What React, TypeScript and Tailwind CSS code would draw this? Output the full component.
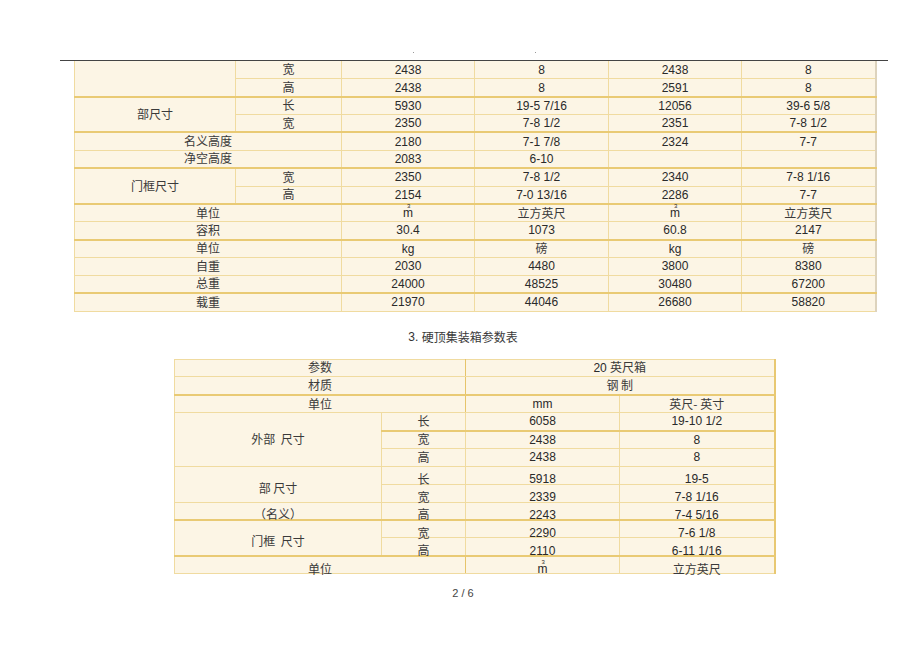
import React from "react";

const num = "font-['Liberation_Sans',Arial,sans-serif]";
const cjk = "font-['Noto_Sans_CJK_SC','Noto_Sans',sans-serif]";

const cell = "border border-[#f0dba0] p-0 text-center align-middle text-[12px] leading-[14px] text-[#2a2a2a] whitespace-nowrap";
const thickTop = "border-t-2 border-t-[#e9ca74]";
const majorLeft = "border-l-[1.5px] border-l-[#e6c46a]";

function M3() {
  return (
    <span className={`relative inline-block ${num}`}>
      m
      <span className="absolute left-[4px] top-[-3px] text-[6px] leading-[6px]">3</span>
    </span>
  );
}

function Zh({ children }: { children: React.ReactNode }) {
  return <span className={`${cjk} text-[#3a3a3a]`}>{children}</span>;
}

function N({ children }: { children: React.ReactNode }) {
  return <span className={num}>{children}</span>;
}

type Row = {
  label?: { text: string; rowSpan?: number; colSpan?: number };
  sub?: string;
  vals: React.ReactNode[];
  thick?: boolean;
};

const topRows: Row[] = [
  { label: { text: "", rowSpan: 2 }, sub: "宽", vals: ["2438", "8", "2438", "8"] },
  { sub: "高", vals: ["2438", "8", "2591", "8"] },
  { label: { text: "部尺寸", rowSpan: 2 }, sub: "长", vals: ["5930", "19-5 7/16", "12056", "39-6 5/8"], thick: true },
  { sub: "宽", vals: ["2350", "7-8 1/2", "2351", "7-8 1/2"] },
  { label: { text: "名义高度", colSpan: 2 }, vals: ["2180", "7-1 7/8", "2324", "7-7"], thick: true },
  { label: { text: "净空高度", colSpan: 2 }, vals: ["2083", "6-10", "", ""] },
  { label: { text: "门框尺寸", rowSpan: 2 }, sub: "宽", vals: ["2350", "7-8 1/2", "2340", "7-8 1/16"], thick: true },
  { sub: "高", vals: ["2154", "7-0 13/16", "2286", "7-7"] },
  { label: { text: "单位", colSpan: 2 }, vals: [<M3 />, <Zh>立方英尺</Zh>, <M3 />, <Zh>立方英尺</Zh>], thick: true },
  { label: { text: "容积", colSpan: 2 }, vals: ["30.4", "1073", "60.8", "2147"] },
  { label: { text: "单位", colSpan: 2 }, vals: ["kg", <Zh>磅</Zh>, "kg", <Zh>磅</Zh>], thick: true },
  { label: { text: "自重", colSpan: 2 }, vals: ["2030", "4480", "3800", "8380"] },
  { label: { text: "总重", colSpan: 2 }, vals: ["24000", "48525", "30480", "67200"] },
  { label: { text: "载重", colSpan: 2 }, vals: ["21970", "44046", "26680", "58820"], thick: true },
];

function TopTable() {
  return (
    <table className="ml-[74px] w-[801px] table-fixed border-collapse border-r-2 border-r-[#ddd3bd] bg-[#fcf5e5]">
      <colgroup>
        <col className="w-[161px]" />
        <col className="w-[106px]" />
        <col className="w-[133px]" />
        <col className="w-[134px]" />
        <col className="w-[133px]" />
        <col className="w-[134px]" />
      </colgroup>
      <tbody>
        {topRows.map((r, i) => (
          <tr key={i} className="h-[17.86px]">
            {r.label && (
              <td
                rowSpan={r.label.rowSpan}
                colSpan={r.label.colSpan}
                className={`${cell} ${r.thick ? thickTop : ""} ${i === 0 ? "border-t-0" : ""}`}
              >
                <Zh>{r.label.text}</Zh>
              </td>
            )}
            {r.sub && (
              <td className={`${cell} ${r.thick ? thickTop : ""} ${i === 0 ? "border-t-0" : ""}`}>
                <Zh>{r.sub}</Zh>
              </td>
            )}
            {r.vals.map((v, j) => (
              <td
                key={j}
                className={`${cell} ${r.thick ? thickTop : ""} ${i === 0 ? "border-t-0" : ""} ${j === 0 || j === 1 || j === 3 ? majorLeft : ""}`}
              >
                {typeof v === "string" ? <N>{v}</N> : v}
              </td>
            ))}
          </tr>
        ))}
      </tbody>
    </table>
  );
}

const lowered = "inline-block translate-y-[4px]";

function HardTopTable() {
  const sub = (t: string, shift = false, thick = false) => (
    <td className={`${cell} ${thick ? thickTop : ""}`}>
      <span className={shift ? lowered : ""}>
        <Zh>{t}</Zh>
      </span>
    </td>
  );
  const val = (v: React.ReactNode, shift = false, thick = false) => (
    <td className={`${cell} ${thick ? thickTop : ""}`}>
      <span className={shift ? lowered : ""}>{typeof v === "string" ? <N>{v}</N> : v}</span>
    </td>
  );
  return (
    <table className="ml-[174px] w-[600px] table-fixed border-collapse border-r-2 border-r-[#e8c872] bg-[#fcf5e5]">
      <colgroup>
        <col className="w-[207px]" />
        <col className="w-[84px]" />
        <col className="w-[154px]" />
        <col className="w-[155px]" />
      </colgroup>
      <tbody>
        <tr className="h-[17.9px]">
          <td colSpan={2} className={`${cell} border-r-[1.5px] border-r-[#e6c46a]`}>
            <Zh>参数</Zh>
          </td>
          <td colSpan={2} className={cell}>
            <N>20 </N>
            <Zh>英尺箱</Zh>
          </td>
        </tr>
        <tr className="h-[17.9px]">
          <td colSpan={2} className={`${cell} border-r-[1.5px] border-r-[#e6c46a]`}>
            <Zh>材质</Zh>
          </td>
          <td colSpan={2} className={cell}>
            <Zh>钢&nbsp;制</Zh>
          </td>
        </tr>
        <tr className="h-[17.9px]">
          <td colSpan={2} className={`${cell} ${thickTop} border-r-[1.5px] border-r-[#e6c46a]`}>
            <Zh>单位</Zh>
          </td>
          {val("mm", false, true)}
          {val(<Zh>英尺- 英寸</Zh>, false, true)}
        </tr>
        <tr className="h-[17.9px]">
          <td rowSpan={3} className={cell}>
            <Zh>外部&nbsp;&nbsp;尺寸</Zh>
          </td>
          {sub("长")}
          {val("6058")}
          {val("19-10 1/2")}
        </tr>
        <tr className="h-[17.9px]">
          {sub("宽", false, true)}
          {val("2438", false, true)}
          {val("8", false, true)}
        </tr>
        <tr className="h-[17.9px]">
          {sub("高")}
          {val("2438")}
          {val("8")}
        </tr>
        <tr className="h-[17.9px]">
          <td rowSpan={2} className={cell}>
            <span className={lowered}>
              <Zh>部&nbsp;尺寸</Zh>
            </span>
          </td>
          {sub("长", true)}
          {val("5918", true)}
          {val("19-5", true)}
        </tr>
        <tr className="h-[17.9px]">
          {sub("宽", true)}
          {val("2339", true)}
          {val("7-8 1/16", true)}
        </tr>
        <tr className="h-[17.9px]">
          <td className={cell}>
            <span className={lowered}>
              <Zh>（名义）</Zh>
            </span>
          </td>
          {sub("高", true)}
          {val("2243", true)}
          {val("7-4 5/16", true)}
        </tr>
        <tr className="h-[17.9px]">
          <td rowSpan={2} className={`${cell} ${thickTop}`}>
            <span className={lowered}>
              <Zh>门框&nbsp;&nbsp;尺寸</Zh>
            </span>
          </td>
          {sub("宽", true, true)}
          {val("2290", true, true)}
          {val("7-6 1/8", true, true)}
        </tr>
        <tr className="h-[17.9px]">
          {sub("高", true)}
          {val("2110", true)}
          {val("6-11 1/16", true)}
        </tr>
        <tr className="h-[17.9px]">
          <td colSpan={2} className={`${cell} ${thickTop} border-r-[1.5px] border-r-[#e6c46a]`}>
            <span className={lowered}>
              <Zh>单位</Zh>
            </span>
          </td>
          {val(<M3 />, true, true)}
          {val(<Zh>立方英尺</Zh>, true, true)}
        </tr>
      </tbody>
    </table>
  );
}

export default function App() {
  return (
    <div className="h-[651px] w-[920px] overflow-hidden bg-white">
      <div className="flex h-[60px] items-end pb-[7px]">
        <span className="ml-[413px] h-[1px] w-[1px] bg-[#999]" />
        <span className="ml-[121px] h-[1px] w-[1px] bg-[#999]" />
      </div>
      <div className="ml-[60px] w-[828px] border-t border-[#444]" />
      <TopTable />
      <div className="mt-[16px] flex h-[18px] items-center justify-center pl-[6px] text-[12px] text-[#333]">
        <N>3.&nbsp;</N>
        <Zh>硬顶集装箱参数表</Zh>
      </div>
      <div className="h-[13px]" />
      <HardTopTable />
      <div className={`mt-[12px] flex h-[14px] items-center justify-center pl-[6px] text-[11px] text-[#444] ${num}`}>
        2 / 6
      </div>
    </div>
  );
}
